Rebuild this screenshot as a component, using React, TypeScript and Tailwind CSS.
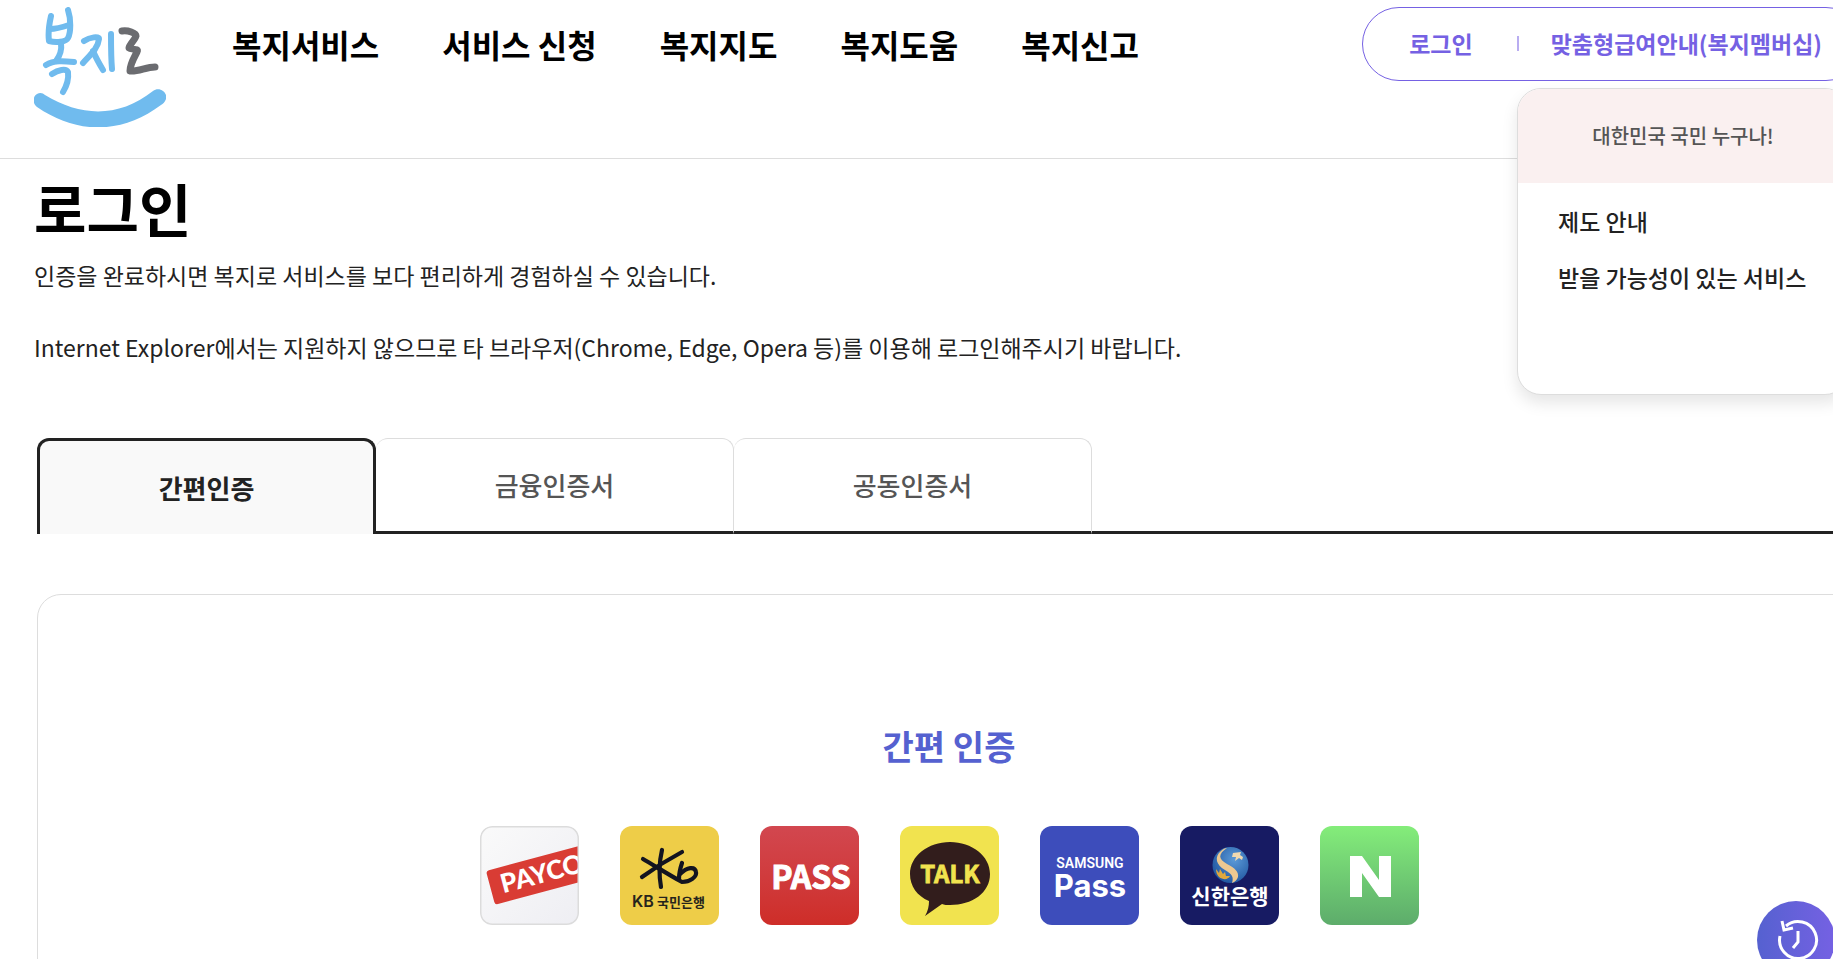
import type { ReactNode } from "react";

const menus = ["복지서비스", "서비스 신청", "복지지도", "복지도움", "복지신고"];

const tabs = [
  { id: "simple", label: "간편인증", active: true },
  { id: "finance", label: "금융인증서", active: false },
  { id: "joint", label: "공동인증서", active: false },
];

function Logo() {
  return (
    <svg viewBox="0 0 132 120" className="w-[132px] h-[120px]" fill="none" strokeLinecap="round" strokeLinejoin="round" aria-hidden="true">
      <g stroke="#70bbee" strokeWidth="6">
        <path d="M17 9C15 18 14 27 15 34C22 36 32 35 34 31C37 25 37 12 34 3" />
        <path d="M16 22C22 22 29 20 35 18" />
        <path d="M27 36C28 43 25 50 22 54" />
        <path d="M12 58C20 53 30 54 40 55" />
        <path d="M18 67C24 63 32 61 34 65C35 73 32 80 29 85" />
        <path d="M50 34C56 30 65 29 65 32C64 42 55 49 49 56" />
        <path d="M59 44C62 51 66 58 69 63" />
        <path d="M77 27C77 40 77 51 78 62" />
      </g>
      <path d="M88 24C94 23 102 26 102 29C101 33 95 38 95 41C97 43 105 41 103 45C100 51 96 57 96 64C104 65 112 60 121 60" stroke="#6b6c70" strokeWidth="7" />
      <path d="M11 88C47 110 85 111 119 84C125 79 134 85 132 92C131 95 129 97 127 98C88 127 44 128 3 100C-2 96 -1 89 3 87C6 85 9 86 11 88Z" fill="#70bbee" />
    </svg>
  );
}

function Tile({ label, className, children }: { label: string; className: string; children: ReactNode }) {
  return (
    <li>
      <button type="button" aria-label={label} className={`block size-[99px] overflow-hidden rounded-xl ${className}`}>
        <svg viewBox="0 0 99 99" className="size-full" fontFamily="'Noto Sans CJK KR', sans-serif" textAnchor="middle">
          {children}
        </svg>
      </button>
    </li>
  );
}

function Providers() {
  return (
    <ul className="mt-[54px] flex justify-center gap-[41px]">
      <Tile label="PAYCO" className="bg-linear-to-br from-[#fafafa] to-[#eeeef3]">
        <g transform="rotate(-15 6 45)">
          <rect x="6" y="45" width="120" height="35" rx="3" fill="#d93c34" />
          <text x="17" y="71" fontSize="26" fontWeight="900" fontFamily="Lato" textAnchor="start" fill="#fff">PAYCO</text>
        </g>
        <rect x=".75" y=".75" width="97.5" height="97.5" rx="11.5" fill="none" stroke="#dcdcdc" strokeWidth="1.5" />
      </Tile>

      <Tile label="KB국민은행" className="bg-[#eecd48]">
        <g fill="none" stroke="#131420" strokeWidth="4.2" strokeLinecap="round" strokeLinejoin="round">
          <path d="M42 24C39 37 39 50 41 61" />
          <path d="M23 33C35 40 49 49 62 56C70 56 77 51 76 46C75 40 67 41 60 48" />
          <path d="M62 26C47 34 33 43 22 51" />
          <path d="M62 37C60 43 59 48 59 53" />
        </g>
        <text x="12" y="81" fontSize="16" fontWeight="600" fontFamily="Inter" textAnchor="start" fill="#26241c">KB</text>
        <text x="61" y="81" fontSize="13" fontWeight="700" fill="#26241c">국민은행</text>
      </Tile>

      <Tile label="PASS" className="bg-linear-to-b from-[#d2474f] to-[#ce2d28]">
        <text x="51" y="63" fontSize="32" fontWeight="700" fill="#fff" stroke="#fff" strokeWidth="1">PASS</text>
      </Tile>

      <Tile label="카카오톡" className="bg-[#f1e34f]">
        <path d="M50 16C72 16 90 30 90 48C90 67 72 79 50 79C47 79 44 79 42 78L25 90C28 85 29 80 29 75C17 70 10 60 10 48C10 30 28 16 50 16Z" fill="#321d1c" />
        <text x="50" y="57" fontSize="24" fontWeight="700" fill="#f1e34f" stroke="#f1e34f" strokeWidth=".8">TALK</text>
      </Tile>

      <Tile label="SAMSUNG Pass" className="bg-[#3d4dbb]">
        <text x="50" y="42" fontSize="14" fontWeight="600" fontFamily="Roboto" fill="#fff">SAMSUNG</text>
        <text x="50" y="71" fontSize="31" fontWeight="700" fontFamily="Inter" fill="#fff">Pass</text>
      </Tile>

      <Tile label="신한은행" className="bg-[#171b63]">
        <defs>
          <radialGradient id="globe" cx=".6" cy=".35" r=".7">
            <stop offset="0" stopColor="#5b9ad8" />
            <stop offset="1" stopColor="#1f559f" />
          </radialGradient>
        </defs>
        <circle cx="50.5" cy="39" r="18" fill="url(#globe)" />
        <path d="M47 22C38 28 38 33 47 38C55 42 59 46 58 51C57 54 55 56 52 57C54 51 52 48 45 44C36 39 34 31 41 25C43 23 45 22 47 22Z" fill="#ecc891" />
        <path d="M53 27L61 26L60 29L63 31L62 34L59 32L55 35L56 31L52 31Z" fill="#f0d9b0" />
        <path d="M36 43L39 47L40 43L43 48L45 46L46 50L50 50C48 54 43 54 39 51C37 49 36 46 36 43Z" fill="#e0a83d" />
        <text x="50" y="78" fontSize="21" fontWeight="700" fill="#fff">신한은행</text>
      </Tile>

      <Tile label="네이버" className="bg-linear-to-b from-[#84ed7a] to-[#5dac6b]">
        <path d="M30 30H42L59 54V30H71V71H59L42 47V71H30Z" fill="#fff" />
      </Tile>
    </ul>
  );
}

export default function App() {
  return (
    <div className="relative h-screen overflow-hidden bg-white font-['Noto_Sans_CJK_KR',sans-serif] text-[#222]">
      {/* Header */}
      <header className="-mr-[30px] flex h-[159px] items-start border-b border-[#ddd] pl-[34px] pt-[7px]">
        <a href="#home" aria-label="복지로">
          <Logo />
        </a>
        <nav className="ml-[66px] flex gap-[63px] pt-[14px]">
          {menus.map((menu) => (
            <a key={menu} href="#menu" className="text-[32px] leading-[46px] font-bold whitespace-nowrap text-black">
              {menu}
            </a>
          ))}
        </nav>
        <div className="relative ml-auto flex h-[74px] items-center rounded-full border border-[#7561e3] pr-10 pb-[2px] pl-[46px] text-[23px] font-bold whitespace-nowrap text-[#7561e3]">
          <a href="#login">로그인</a>
          <span className="mr-8 ml-11 h-[15px] w-[2px] bg-[#b9adf1]" />
          <a href="#membership">맞춤형급여안내(복지멤버십)</a>

          {/* Membership dropdown */}
          <div className="absolute top-20 right-[13px] z-10 h-[307px] w-[332px] overflow-hidden rounded-3xl border border-[#ddd] bg-white font-medium text-[#222] shadow-[0_8px_16px_rgba(0,0,0,0.1)]">
            <p className="bg-[#faf0f0] text-center text-xl leading-[94px] text-[#555]">대한민국 국민 누구나!</p>
            <ul className="space-y-5 px-10 pt-5 leading-9">
              <li>
                <a href="#guide">제도 안내</a>
              </li>
              <li>
                <a href="#services">받을 가능성이 있는 서비스</a>
              </li>
            </ul>
          </div>
        </div>
      </header>

      <main className="-mr-7 pl-[34px]">
        <h1 className="pt-2 text-[57px] leading-[80px] font-bold text-black">로그인</h1>
        <div className="mt-[10px] space-y-9 text-[23px] leading-9">
          <p>인증을 완료하시면 복지로 서비스를 보다 편리하게 경험하실 수 있습니다.</p>
          <p>Internet Explorer에서는 지원하지 않으므로 타 브라우저(Chrome, Edge, Opera 등)를 이용해 로그인해주시기 바랍니다.</p>
        </div>

        {/* Tabs */}
        <div className="pl-[3px]">
          <div role="tablist" className="mt-[73px] flex h-24 text-[26px]">
            {tabs.map((tab) => (
              <button
                key={tab.id}
                type="button"
                role="tab"
                aria-selected={tab.active}
                className={
                  tab.active
                    ? "w-[339px] rounded-t-xl border-3 border-b-0 border-[#222] bg-[#f9f9f9] font-bold"
                    : "w-[358px] rounded-t-xl border border-l-0 border-[#ddd] border-b-3 border-b-[#222] pb-[2px] font-medium text-[#555]"
                }
              >
                {tab.label}
              </button>
            ))}
            <div className="flex-1 border-b-3 border-[#222]" />
          </div>

          <section className="mt-[60px] h-[480px] rounded-3xl border border-[#ddd] pt-[125px]">
            <h2 className="mb-[55px] text-center text-[34px] leading-[51px] font-bold text-[#5561d0]">간편 인증</h2>
            <Providers />
          </section>
        </div>
      </main>

      {/* Recent history */}
      <button type="button" aria-label="최근 이용" className="absolute right-[-2px] bottom-[-20px] flex size-[78px] items-center justify-center rounded-full bg-linear-to-r from-[#5561d0] to-[#7561e3]">
        <svg viewBox="0 0 44 44" className="ml-1 size-11" fill="none" stroke="#fff" strokeWidth="3">
          <path d="M4 18A18.500 18.500 0 1 0 10 8" />
          <path d="M6 3L8 12L17 10" />
          <path d="M22 13V24L17 30" />
        </svg>
      </button>
    </div>
  );
}
